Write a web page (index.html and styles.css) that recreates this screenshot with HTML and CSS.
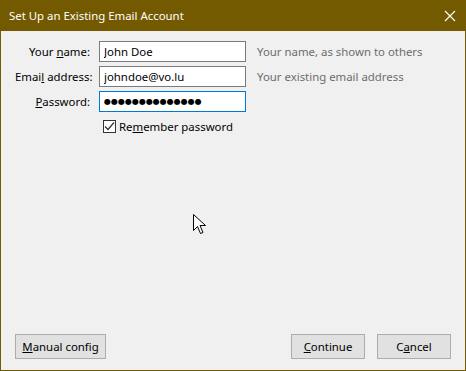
FILE: index.html
```html
<!DOCTYPE html>
<html>
<head>
<meta charset="utf-8">
<link rel="stylesheet" href="styles.css">
</head>
<body>
<div class="window">
  <div class="titlebar">
    <span class="title">Set Up an Existing Email Account</span>
    <svg class="close" width="12" height="12" viewBox="0 0 12 12"><path d="M1 1 L11 11 M11 1 L1 11" stroke="#fff" stroke-width="1.2" fill="none"/></svg>
  </div>
  <div class="content">
    <div class="form">
      <label class="lbl">Your <u>n</u>ame:</label>
      <input class="field" type="text" value="John Doe">
      <span class="hint">Your name, as shown to others</span>

      <label class="lbl">Emai<u>l</u> address:</label>
      <input class="field" type="text" value="johndoe@vo.lu">
      <span class="hint">Your existing email address</span>

      <label class="lbl"><u>P</u>assword:</label>
      <div class="field focus pw">●●●●●●●●●●●●●●</div>
      <span class="hint"></span>

      <span></span>
      <label class="check"><span class="box"><svg width="11" height="11" viewBox="0 0 11 11"><path d="M1 5.5 L4 8.5 L10 1.5" stroke="#333" stroke-width="1.2" fill="none"/></svg></span>Re<u>m</u>ember password</label>
    </div>
    <div class="spacer"></div>
    <div class="buttons">
      <button class="btn manual"><u>M</u>anual config</button>
      <div class="right">
        <button class="btn wide"><u>C</u>ontinue</button>
        <button class="btn wide">C<u>a</u>ncel</button>
      </div>
    </div>
  </div>
  <svg class="cursor" width="14" height="22" viewBox="0 0 14 22"><path d="M0.5 0.5 L0.5 16.5 L4.5 12.5 L7.5 19.5 L10 18.5 L7 11.5 L12.5 11.5 Z" fill="#fff" stroke="#000" stroke-width="1"/></svg>
</div>
</body>
</html>
```
FILE: styles.css
```css
html, body {
  margin: 0;
  padding: 0;
  background: #f0f0f0;
}
.window {
  position: relative;
  width: 466px;
  height: 371px;
  box-sizing: border-box;
  border: 1px solid #735a00;
  border-top: 0;
  background: #f0f0f0;
  display: flex;
  flex-direction: column;
  font-family: "Noto Sans", "Open Sans", sans-serif;
  font-size: 11.4px;
  color: #000;
}
.titlebar {
  height: 31px;
  margin: 0 -1px;
  background: #735a00;
  display: flex;
  align-items: center;
  justify-content: space-between;
  padding: 0 10px 0 9px;
  flex-shrink: 0;
}
.title {
  color: #fff;
  font-size: 11.4px;
}
.close {
  display: block;
}
.content {
  flex: 1;
  display: flex;
  flex-direction: column;
  padding: 10px 14px 11px 14px;
}
.form {
  display: grid;
  grid-template-columns: 75px 147px auto;
  column-gap: 9px;
  row-gap: 4px;
  align-items: center;
}
.lbl {
  text-align: right;
  white-space: nowrap;
}
.field {
  box-sizing: border-box;
  height: 21px;
  width: 147px;
  border: 1px solid #7a7a7a;
  background: #fff;
  padding: 0 4px;
  font: inherit;
  color: #000;
  outline: none;
  margin: 0;
}
.field.focus {
  border-color: #0078d7;
}
.pw {
  display: flex;
  align-items: center;
  font-family: "DejaVu Sans", sans-serif;
  font-size: 8px;
  letter-spacing: 0;
}
.hint {
  color: #6d6d6d;
  margin-left: 2px;
  white-space: nowrap;
}
.check {
  display: flex;
  align-items: center;
  margin-top: 3px;
  margin-left: 4px;
  white-space: nowrap;
}
.box {
  box-sizing: border-box;
  width: 13px;
  height: 13px;
  border: 1px solid #333;
  background: #fff;
  margin-right: 3px;
  display: flex;
  align-items: center;
  justify-content: center;
}
.box svg {
  display: block;
}
.spacer {
  flex: 1;
}
.buttons {
  display: flex;
  justify-content: space-between;
  align-items: flex-end;
}
.right {
  display: flex;
  gap: 12px;
}
.btn {
  box-sizing: border-box;
  height: 25px;
  border: 1px solid #adadad;
  background: #e1e1e1;
  font: inherit;
  color: #000;
  padding: 0;
  margin: 0;
  white-space: nowrap;
}
.btn.manual {
  width: 91px;
}
.btn.wide {
  width: 74px;
}
.cursor {
  position: absolute;
  left: 192px;
  top: 214px;
}
```
